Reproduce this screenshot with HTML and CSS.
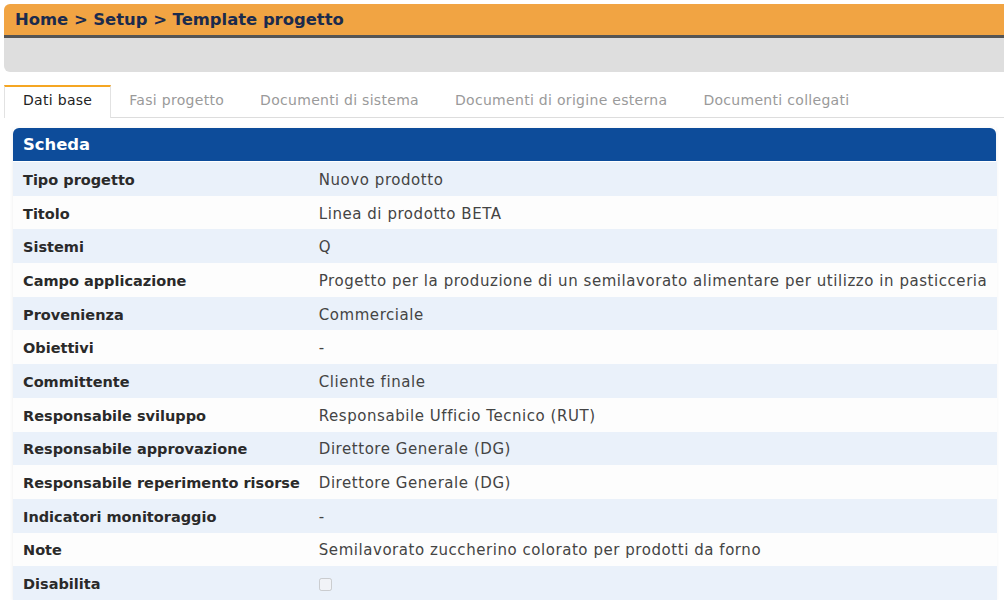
FILE: index.html
```html
<!DOCTYPE html>
<html lang="it">
<head>
    <meta charset="UTF-8">
    <meta name="viewport" content="width=device-width, initial-scale=1.0">
    <title>Template progetto</title>
    <link rel="stylesheet" href="styles.css">
</head>
<body>
<div class="page-title">Home &gt; Setup &gt; Template progetto</div>
<div class="toolbar"></div>

<ul class="tabs">
    <li class="active">Dati base</li>
    <li>Fasi progetto</li>
    <li>Documenti di sistema</li>
    <li>Documenti di origine esterna</li>
    <li>Documenti collegati</li>
</ul>

<div class="card">
    <div class="card-header">Scheda</div>
    <table class="details">
        <tr><th>Tipo progetto</th><td>Nuovo prodotto</td></tr>
        <tr><th>Titolo</th><td>Linea di prodotto BETA</td></tr>
        <tr><th>Sistemi</th><td>Q</td></tr>
        <tr><th>Campo applicazione</th><td>Progetto per la produzione di un semilavorato alimentare per utilizzo in pasticceria</td></tr>
        <tr><th>Provenienza</th><td>Commerciale</td></tr>
        <tr><th>Obiettivi</th><td>-</td></tr>
        <tr><th>Committente</th><td>Cliente finale</td></tr>
        <tr><th>Responsabile sviluppo</th><td>Responsabile Ufficio Tecnico (RUT)</td></tr>
        <tr><th>Responsabile approvazione</th><td>Direttore Generale (DG)</td></tr>
        <tr><th>Responsabile reperimento risorse</th><td>Direttore Generale (DG)</td></tr>
        <tr><th>Indicatori monitoraggio</th><td>-</td></tr>
        <tr><th>Note</th><td>Semilavorato zuccherino colorato per prodotti da forno</td></tr>
        <tr><th>Disabilita</th><td><input type="checkbox" disabled></td></tr>
    </table>
</div>
</body>
</html>
```

FILE: styles.css
```css
body {
    font-family: "DejaVu Sans", Arial, sans-serif;
    margin: 0;
    padding: 4px 0 0 4px;
    background-color: #fff;
    color: #333;
    overflow: hidden;
}
.page-title {
    background-color: #f1a443;
    color: #1b2b4d;
    font-weight: bold;
    font-size: 16.4px;
    height: 31px;
    line-height: 31px;
    padding-left: 11px;
    border-top-left-radius: 6px;
    border-bottom: 3px solid #555;
}
.toolbar {
    height: 34px;
    background-color: #dedede;
    border-bottom-left-radius: 6px;
}
.tabs {
    list-style-type: none;
    margin: 13px 0 0 0;
    padding: 0;
    display: flex;
    border-bottom: 1px solid #ddd;
    height: 32px;
}
.tabs li {
    padding: 0 18px;
    font-size: 14px;
    letter-spacing: 0.3px;
    line-height: 27px;
    color: #9a9a9a;
    border-top: 2px solid transparent;
}
.tabs li.active {
    color: #222;
    background-color: #fff;
    border-top-color: #f5a623;
    border-left: 1px solid #e2e2e2;
    border-right: 1px solid #e2e2e2;
    margin-bottom: -1px;
}
.card {
    margin: 10px 8px 0 9px;
    box-shadow: 0 1px 4px rgba(0, 0, 0, 0.08);
}
.card-header {
    background-color: #0d4c9a;
    color: #fff;
    font-weight: bold;
    font-size: 16.4px;
    height: 33px;
    line-height: 33px;
    padding-left: 10px;
    border-radius: 6px 6px 0 0;
    border-bottom: 1px solid #fff;
}
.details {
    width: 100%;
    border-collapse: collapse;
    font-size: 14.5px;
}
.details tr {
    height: 33.7px;
    background-color: #fdfdfd;
}
.details tr:nth-child(odd) {
    background-color: #eaf1fa;
}
.details th,
.details td {
    text-align: left;
    padding: 2px 10px 0 10px;
    line-height: 20px;
    white-space: nowrap;
}
.details th {
    width: 276px;
    font-weight: bold;
    color: #2a2a2a;
}
.details td {
    font-size: 15px;
    letter-spacing: 0.55px;
    color: #444;
    padding-left: 9px;
}
.details input[type="checkbox"] {
    margin: 0;
    width: 13px;
    height: 13px;
    vertical-align: middle;
}
```
